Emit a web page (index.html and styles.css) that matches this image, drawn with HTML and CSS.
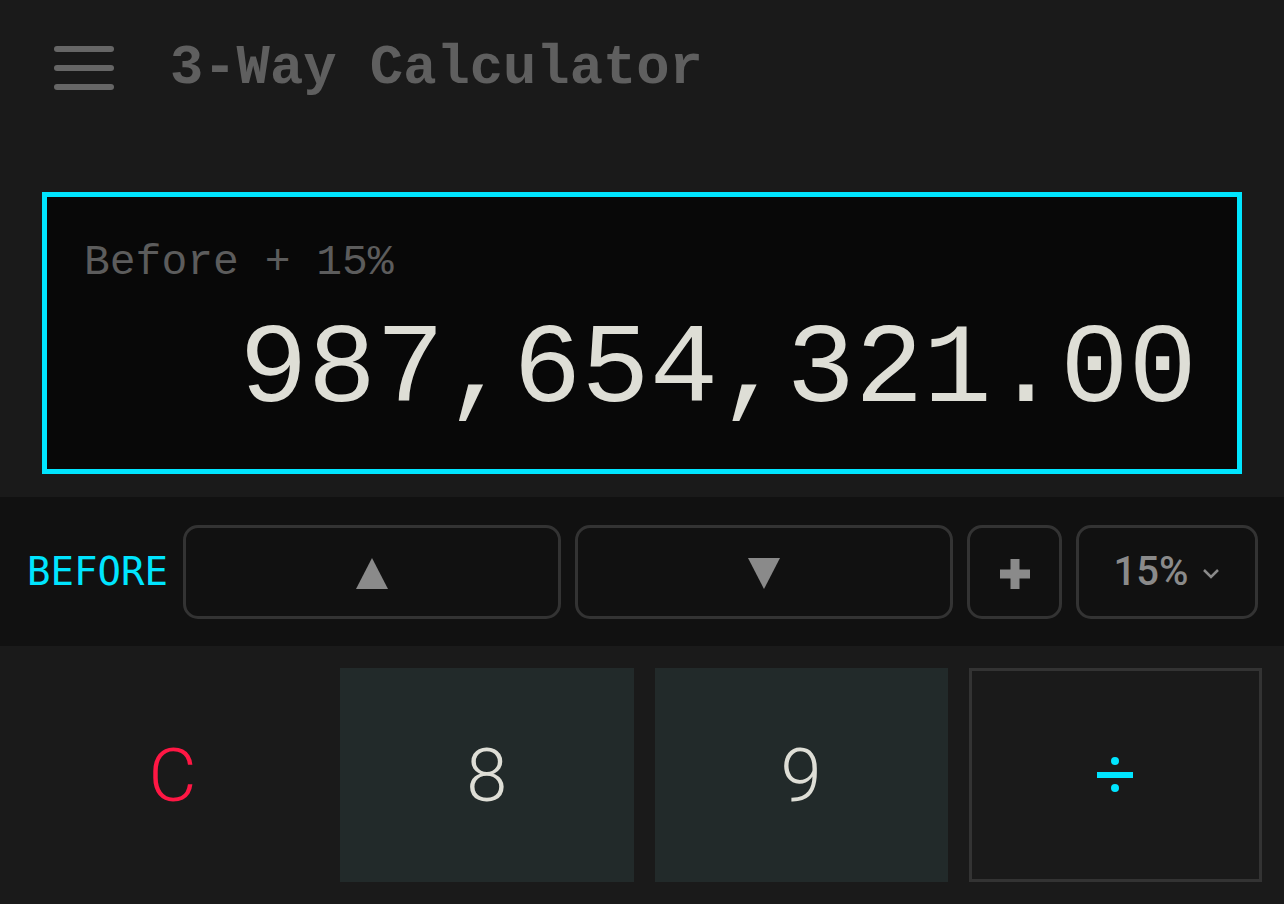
FILE: index.html
```html
<!DOCTYPE html>
<html lang="en">
<head>
  <meta charset="UTF-8" />
  <meta name="viewport" content="width=device-width, initial-scale=1.0"/>
  <title>3-Way Calculator</title>
  <link rel="stylesheet" href="styles.css">
</head>
<body>
  <header class="topbar">
    <button class="menu" aria-label="Menu">
      <span></span><span></span><span></span>
    </button>
    <h1 class="title">3-Way Calculator</h1>
  </header>

  <section class="display">
    <div class="expr">Before + 15%</div>
    <div class="value">987,654,321.00</div>
  </section>

  <section class="modebar">
    <span class="mode">BEFORE</span>
    <button class="pill wide" aria-label="Up">
      <svg width="34" height="33" viewBox="0 0 34 33"><path d="M17 1 L33 32 L1 32 Z" fill="#8a8a8a"/></svg>
    </button>
    <button class="pill wide" aria-label="Down">
      <svg width="34" height="33" viewBox="0 0 34 33"><path d="M1 1 L33 1 L17 32 Z" fill="#8a8a8a"/></svg>
    </button>
    <button class="pill op" aria-label="Add">
      <svg width="30" height="30" viewBox="0 0 30 30"><path d="M15 0 V30 M0 15 H30" stroke="#8a8a8a" stroke-width="9"/></svg>
    </button>
    <button class="pill pct">15%
      <svg width="18" height="12" viewBox="0 0 18 12"><path d="M2 2 L9 9 L16 2" fill="none" stroke="#8a8a8a" stroke-width="2.5"/></svg>
    </button>
  </section>

  <section class="keys">
    <button class="key clear">C</button>
    <button class="key num">8</button>
    <button class="key num">9</button>
    <button class="key oper" aria-label="Divide">
      <svg width="36" height="36" viewBox="0 0 36 36">
        <circle cx="18" cy="4" r="4" fill="#00e5ff"/>
        <rect x="0" y="15" width="36" height="6" fill="#00e5ff"/>
        <circle cx="18" cy="31" r="4" fill="#00e5ff"/>
      </svg>
    </button>
  </section>
</body>
</html>
```

FILE: styles.css
```css
body {
  margin: 0;
  background: #1a1a1a;
  font-family: "Liberation Mono", "DejaVu Sans Mono", monospace;
  overflow: hidden;
}
button {
  font: inherit;
  cursor: pointer;
}

/* header */
.topbar {
  height: 136px;
  display: flex;
  align-items: center;
  padding: 0 54px;
  gap: 56px;
}
.menu {
  width: 60px;
  height: 44px;
  padding: 0;
  border: none;
  background: none;
  display: flex;
  flex-direction: column;
  justify-content: space-between;
}
.menu span {
  display: block;
  height: 6px;
  border-radius: 3px;
  background: #666;
}
.title {
  margin: 0;
  font-size: 55.5px;
  font-weight: 700;
  color: #5f5f5f;
}

/* result panel */
.display {
  margin: 56px 42px 0;
  height: 272px;
  border: 5px solid #00e5ff;
  background: #080808;
  padding: 0 40px 0 37px;
  display: flex;
  flex-direction: column;
}
.expr {
  margin-top: 36px;
  font-size: 43px;
  line-height: 60px;
  color: #5c5c5c;
}
.value {
  margin-top: 13px;
  text-align: right;
  font-size: 114px;
  line-height: 130px;
  color: #deded6;
  font-variant-numeric: slashed-zero;
}

/* mode row */
.modebar {
  margin-top: 23px;
  height: 149px;
  background: #111;
  display: flex;
  align-items: center;
  padding: 0 26px 0 27px;
  gap: 14px;
}
.mode {
  width: 142px;
  font-family: "DejaVu Sans Mono", monospace;
  font-size: 39px;
  color: #00e5ff;
}
.pill {
  height: 94px;
  padding: 0;
  border: 3px solid #333;
  border-radius: 15px;
  background: #111;
  color: #8a8a8a;
  display: flex;
  align-items: center;
  justify-content: center;
}
.pill svg {
  margin-top: 4px;
}
.wide {
  flex: 1;
}
.op {
  width: 95px;
}
.pct {
  width: 182px;
  font-family: Roboto, sans-serif;
  font-weight: 500;
  font-size: 40px;
  gap: 14px;
}

/* keypad */
.keys {
  display: grid;
  grid-template-columns: repeat(4, 1fr);
  gap: 21px;
  padding: 22px 22px 0 26px;
}
.key {
  height: 214px;
  border: none;
  background: none;
  font-family: Roboto, sans-serif;
  font-weight: 300;
  font-size: 74px;
}
.clear {
  color: #ff1744;
}
.num {
  background: #222a2a;
  color: #deded6;
}
.oper {
  border: 3px solid #333;
  background: #1a1a1a;
  display: flex;
  align-items: center;
  justify-content: center;
}
```
